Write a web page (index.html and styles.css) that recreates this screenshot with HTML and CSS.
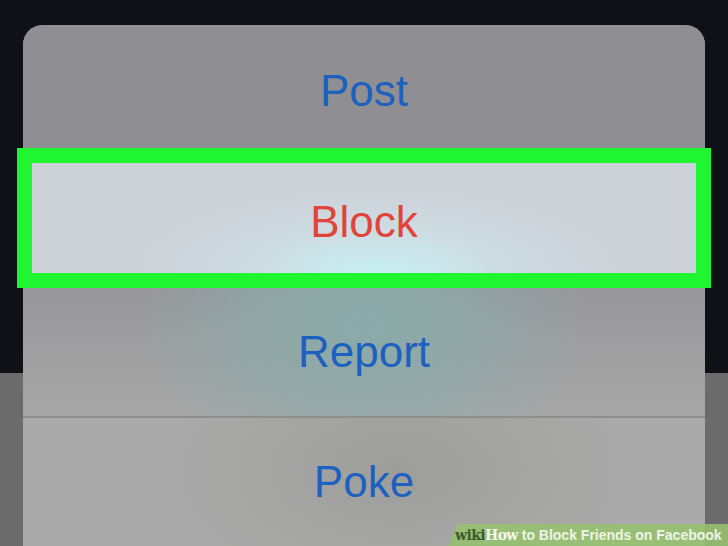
FILE: index.html
```html
<!DOCTYPE html>
<html lang="en">
<head>
  <meta charset="UTF-8" />
  <title>How to Block Friends on Facebook</title>
  <link rel="stylesheet" href="styles.css">
</head>
<body>

  <div class="screen">
    <!-- action sheet -->
    <div class="sheet">
      <div class="row row-post"><span class="label">Post</span></div>
      <div class="row row-block"><span class="label danger">Block</span></div>
      <div class="row row-report"><span class="label">Report</span></div>
      <div class="row row-poke"><span class="label">Poke</span></div>
    </div>

    <div class="caption">
      <span class="wiki">wiki</span><span class="how">How</span> to Block Friends on Facebook
    </div>
  </div>

</body>
</html>
```

FILE: styles.css
```css
body {
  margin: 0;
  font-family: "Liberation Sans", Arial, sans-serif;
}

.screen {
  position: relative;
  width: 728px;
  height: 546px;
  overflow: hidden;
  background: linear-gradient(#0e1116 0, #0e1116 373px, #6b6b6b 373px);
  padding-top: 25px;
  box-sizing: border-box;
}

.sheet {
  margin-left: 23px;
  width: 682px;
  height: 521px;
  border-radius: 20px 20px 0 0;
  background: #a8a8a8;
  display: flex;
  flex-direction: column;
}

.row {
  display: flex;
  align-items: center;
  justify-content: center;
  box-sizing: border-box;
}

.label {
  font-size: 44px;
  line-height: 1;
  color: #1c60c0;
}

.label.danger {
  color: #e2443b;
}

.row-post {
  height: 123px;
  padding-top: 9px;
  border-radius: 20px 20px 0 0;
  background: #8f8f93;
}

.row-block {
  height: 140px;
  margin: 0 -6px;
  padding-top: 8px;
  border: 15px solid #1ff531;
  background:
    radial-gradient(ellipse 260px 90px at 52% 100%, #c6f0f2 0%, rgba(205, 230, 235, 0.5) 50%, rgba(205, 209, 216, 0) 100%),
    #cdd1d8;
}

.row-report {
  height: 130px;
  background:
    radial-gradient(ellipse 220px 150px at 50% 30%, #8aabaa 0%, rgba(138, 171, 170, 0.6) 50%, rgba(160, 160, 162, 0) 100%),
    linear-gradient(#98989b, #a6a6a6);
  border-bottom: 2px solid #8d8f8f;
}

.row-poke {
  flex: 1;
  background:
    radial-gradient(ellipse 240px 140px at 55% 40%, #9d9e9a 0%, rgba(160, 160, 158, 0.6) 50%, rgba(170, 170, 170, 0) 100%),
    #aaaaaa;
}

.caption {
  position: absolute;
  right: 0;
  bottom: 0;
  width: 280px;
  height: 22px;
  padding-left: 7px;
  box-sizing: border-box;
  clip-path: polygon(10px 0, 100% 0, 100% 100%, 0 100%);
  background: rgba(150, 192, 110, 0.88);
  color: #eef4e6;
  font-size: 14px;
  line-height: 23px;
  font-weight: bold;
  white-space: nowrap;
}

.wiki, .how {
  font-family: "DejaVu Serif", Georgia, serif;
  font-size: 14px;
  letter-spacing: -0.6px;
}

.wiki {
  color: #3d5a2c;
}

.how {
  color: #f4f8ee;
}
```
